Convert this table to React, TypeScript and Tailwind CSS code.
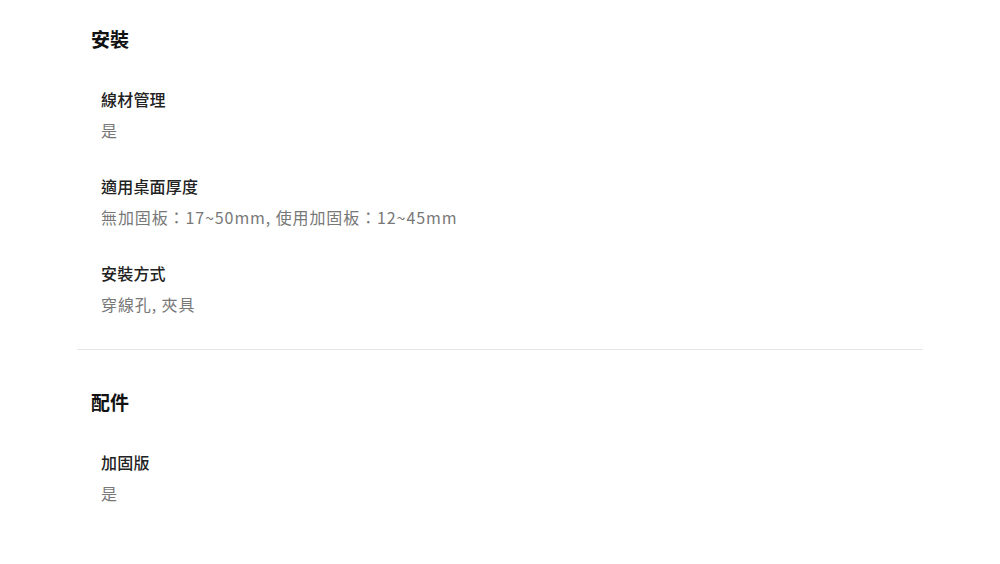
import React from 'react';

type Spec = { label: string; value: string };

const sections: { title: string; items: Spec[] }[] = [
  {
    title: '安裝',
    items: [
      { label: '線材管理', value: '是' },
      { label: '適用桌面厚度', value: '無加固板：17~50mm, 使用加固板：12~45mm' },
      { label: '安裝方式', value: '穿線孔, 夾具' },
    ],
  },
  {
    title: '配件',
    items: [{ label: '加固版', value: '是' }],
  },
];

const SpecSection: React.FC<{ title: string; items: Spec[]; first?: boolean; last?: boolean }> = ({
  title,
  items,
  first,
  last,
}) => (
  <section
    className={`${first ? 'pt-[25px]' : 'pt-[38px]'} ${last ? '' : 'pb-[29px] border-b border-[#e6e6e6]'}`}
  >
    <h2 className="pl-[14px] text-[19px] leading-[28px] font-bold text-[#111]">{title}</h2>
    <div className="mt-[32px] pl-[24px] flex flex-col gap-[26px]">
      {items.map((item) => (
        <div key={item.label}>
          <p className="text-[16px] leading-[29px] font-medium tracking-[0.2px] text-[#222]">{item.label}</p>
          <p className="text-[16px] leading-[32px] tracking-[0.9px] text-[#787878]">{item.value}</p>
        </div>
      ))}
    </div>
  </section>
);

export default function App() {
  return (
    <div
      className="w-[1000px] h-[564px] bg-white overflow-hidden"
      style={{ fontFamily: '"Noto Sans CJK TC", "Noto Sans", sans-serif' }}
    >
      <div className="ml-[77px] w-[846px]">
        {sections.map((s, i) => (
          <SpecSection
            key={s.title}
            title={s.title}
            items={s.items}
            first={i === 0}
            last={i === sections.length - 1}
          />
        ))}
      </div>
    </div>
  );
}
